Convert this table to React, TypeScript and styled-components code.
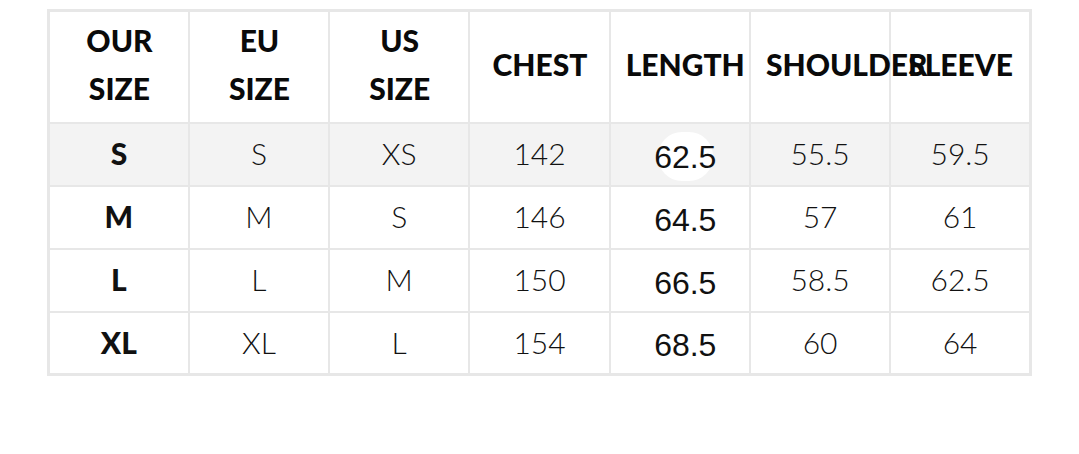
import React from "react";
import styled, { createGlobalStyle } from "styled-components";

const Global = createGlobalStyle`
  html, body { margin: 0; padding: 0; background: #ffffff; }
  body { font-family: "Lato", "Liberation Sans", sans-serif; color: #111; }
`;

const Page = styled.div`
  width: 1079px;
  height: 454px;
  box-sizing: border-box;
  padding: 9px 0 0 47px;
  background: #fff;
`;

const Table = styled.table`
  width: 985px;
  table-layout: fixed;
  border-collapse: collapse;
  border: 3px solid #e7e7e7;
`;

const HeadCell = styled.th`
  height: 112px;
  padding: 0 14px 5px 15px;
  box-sizing: border-box;
  border: 2px solid #e7e7e7;
  text-align: center;
  vertical-align: middle;
  font-family: "Lato", sans-serif;
  font-weight: 900;
  font-size: 30px;
  line-height: 48px;
  color: #0a0a0a;
  white-space: nowrap;
  overflow: visible;
`;

const Row = styled.tr<{ $shaded?: boolean }>`
  background: ${(p) => (p.$shaded ? "#f3f3f3" : "#ffffff")};
`;

const Cell = styled.td<{ $bold?: boolean; $alt?: boolean }>`
  height: 63px;
  padding: ${(p) => (p.$alt ? "6px 5px 0 16px" : "0 15px 2px")};
  box-sizing: border-box;
  border: 2px solid #e7e7e7;
  text-align: center;
  vertical-align: middle;
  font-family: ${(p) => (p.$alt ? '"Liberation Sans", Arial, sans-serif' : '"Lato", sans-serif')};
  font-weight: ${(p) => (p.$bold ? 900 : p.$alt ? 400 : 300)};
  font-size: ${(p) => (p.$alt ? "32px" : "30px")};
  color: #111;
  white-space: nowrap;
`;

const Highlight = styled.span`
  position: relative;
  isolation: isolate;
  display: inline-block;
  &::before {
    content: "";
    position: absolute;
    left: 4px;
    right: 3px;
    top: -7px;
    bottom: -5px;
    background: #ffffff;
    border-radius: 24px;
    z-index: -1;
  }
`;

const headers: string[][] = [
  ["OUR", "SIZE"],
  ["EU", "SIZE"],
  ["US", "SIZE"],
  ["CHEST"],
  ["LENGTH"],
  ["SHOULDER"],
  ["SLEEVE"],
];

const rows = [
  ["S", "S", "XS", "142", "62.5", "55.5", "59.5"],
  ["M", "M", "S", "146", "64.5", "57", "61"],
  ["L", "L", "M", "150", "66.5", "58.5", "62.5"],
  ["XL", "XL", "L", "154", "68.5", "60", "64"],
];

export default function App() {
  return (
    <>
      <Global />
      <Page>
        <Table>
          <thead>
            <tr>
              {headers.map((h, i) => (
                <HeadCell key={i}>
                  {h.map((line, j) => (
                    <React.Fragment key={j}>
                      {j > 0 && <br />}
                      {line}
                    </React.Fragment>
                  ))}
                </HeadCell>
              ))}
            </tr>
          </thead>
          <tbody>
            {rows.map((r, i) => (
              <Row key={i} $shaded={i === 0}>
                {r.map((v, j) => (
                  <Cell key={j} $bold={j === 0} $alt={j === 4}>
                    {i === 0 && j === 4 ? <Highlight>{v}</Highlight> : v}
                  </Cell>
                ))}
              </Row>
            ))}
          </tbody>
        </Table>
      </Page>
    </>
  );
}
